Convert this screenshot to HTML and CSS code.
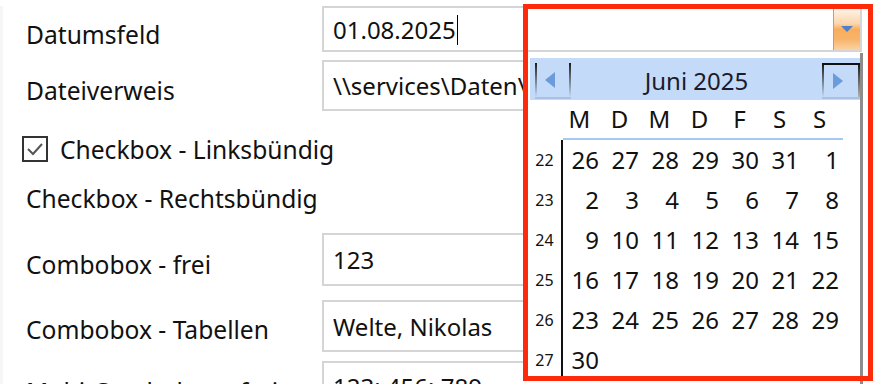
FILE: index.html
```html
<!DOCTYPE html>
<html lang="de">
<head>
    <meta charset="UTF-8">
    <title>Formular</title>
    <link rel="stylesheet" href="styles.css">
</head>
<body>
    <div class="form">
        <!-- Datumsfeld -->
        <div class="row row-date">
            <div class="label">Datumsfeld</div>
            <div class="field field-date">
                <span class="value">01.08.2025<span class="caret"></span></span>
                <div class="drop-button">
                    <svg width="12" height="7" viewBox="0 0 12 7"><polygon points="0,0 12,0 6,6" fill="#4f7fc8"/></svg>
                </div>
            </div>
        </div>

        <div class="row row-file">
            <div class="label">Dateiverweis</div>
            <div class="field"><span class="value">\\services\Daten\Projekte</span></div>
        </div>

        <div class="row row-check-left">
            <div class="checkbox">
                <svg width="22" height="22" viewBox="0 0 22 22"><polyline points="4,11 9,16 18,6" fill="none" stroke="#555" stroke-width="2"/></svg>
            </div>
            <div class="check-label">Checkbox - Linksbündig</div>
        </div>

        <div class="row row-check-right">
            <div class="label">Checkbox - Rechtsbündig</div>
        </div>

        <div class="row row-combo">
            <div class="label">Combobox - frei</div>
            <div class="field"><span class="value">123</span></div>
        </div>

        <div class="row row-table">
            <div class="label">Combobox - Tabellen</div>
            <div class="field"><span class="value">Welte, Nikolas</span></div>
        </div>

        <div class="row row-multi">
            <div class="label">Multi-Combobox - frei</div>
            <div class="field"><span class="value">123; 456; 789</span></div>
        </div>
    </div>

    <!-- Kalender-Popup -->
    <div class="calendar">
        <div class="cal-head">
            <div class="nav nav-prev">
                <svg width="10" height="16" viewBox="0 0 10 16"><polygon points="10,0 10,16 0,8" fill="#6b9bd8"/></svg>
            </div>
            <div class="cal-title">Juni 2025</div>
            <div class="nav nav-next">
                <svg width="10" height="16" viewBox="0 0 10 16"><polygon points="0,0 0,16 10,8" fill="#6b9bd8"/></svg>
            </div>
        </div>
        <div class="cal-grid">
            <div class="wk-empty"></div>
            <div class="dow">M</div><div class="dow">D</div><div class="dow">M</div><div class="dow">D</div><div class="dow">F</div><div class="dow">S</div><div class="dow">S</div>

            <div class="wk">22</div>
            <div class="day">26</div><div class="day">27</div><div class="day">28</div><div class="day">29</div><div class="day">30</div><div class="day">31</div><div class="day">1</div>

            <div class="wk">23</div>
            <div class="day">2</div><div class="day">3</div><div class="day">4</div><div class="day">5</div><div class="day">6</div><div class="day">7</div><div class="day">8</div>

            <div class="wk">24</div>
            <div class="day">9</div><div class="day">10</div><div class="day">11</div><div class="day">12</div><div class="day">13</div><div class="day">14</div><div class="day">15</div>

            <div class="wk">25</div>
            <div class="day">16</div><div class="day">17</div><div class="day">18</div><div class="day">19</div><div class="day">20</div><div class="day">21</div><div class="day">22</div>

            <div class="wk">26</div>
            <div class="day">23</div><div class="day">24</div><div class="day">25</div><div class="day">26</div><div class="day">27</div><div class="day">28</div><div class="day">29</div>

            <div class="wk">27</div>
            <div class="day">30</div><div class="day"></div><div class="day"></div><div class="day"></div><div class="day"></div><div class="day"></div><div class="day"></div>
        </div>
    </div>

    <!-- Markierung -->
    <div class="highlight"></div>
</body>
</html>
```

FILE: styles.css
```css
body{
    margin: 0;
    background: #fff;
    font-family: "Noto Sans", "Open Sans", sans-serif;
    font-size: 24px;
    color: #111;
    overflow: hidden;
    height: 384px;
}
.form{
    border-left: 3px solid #f6f6f6;
    padding-left: 23px;
    height: 384px;
}
.row{
    display: flex;
    align-items: center;
}
.label,
.check-label{
    font-size: 24.6px;
}
.label{
    width: 296px;
    padding-top: 10px;
    white-space: nowrap;
}
.field{
    box-sizing: border-box;
    width: 540px;
    height: 50px;
    border: 2px solid #d5d5d5;
    background: #fff;
    display: flex;
    align-items: center;
    padding-left: 9px;
    white-space: nowrap;
    overflow: hidden;
}
.caret{
    display: inline-block;
    width: 0;
    height: 30px;
    border-right: 1px solid #000;
    vertical-align: middle;
    margin-left: 1px;
    margin-top: -4px;
}

.row-date{ margin-top: 6px; }
.row-date .field{ height: 46px; position: relative; }
.row-file{ margin-top: 8px; }
.row-file .field{ height: 51px; }
.row-check-left{ margin-top: 20px; height: 36px; }
.row-check-right{ margin-top: 13px; height: 36px; }
.row-check-right .label{ padding-top: 0; }
.row-combo{ margin-top: 17px; }
.row-combo .field{ height: 53px; }
.row-table{ margin-top: 14px; }
.row-table .field{ height: 52px; }
.row-table .label{ padding-top: 6px; }
.row-multi{ margin-top: 9px; }

.drop-button{
    position: absolute;
    right: 0;
    top: 1px;
    bottom: 0;
    width: 26px;
    border-left: 1px solid #b3a57a;
    background: linear-gradient(#fff3e6 0%, #fcd7ad 35%, #f9ad5c 50%, #f8b46c 75%, #fbd3a5 100%);
    display: flex;
    align-items: center;
    justify-content: center;
}

.checkbox{
    box-sizing: border-box;
    width: 26px;
    height: 26px;
    border: 2px solid #333;
    margin-left: -4px;
    margin-right: 12px;
    display: flex;
    align-items: center;
    justify-content: center;
}

/* Kalender */
.calendar{
    position: absolute;
    left: 528px;
    top: 53px;
    width: 335px;
    height: 340px;
    box-sizing: border-box;
    background: #fff;
    border-right: 3px solid #8c8c8c;
    padding: 5px 0 0 2px;
}
.cal-head{
    height: 42px;
    background: #c3daf9;
    display: flex;
    align-items: center;
    padding: 0 0 0 5px;
}
.nav{
    box-sizing: border-box;
    height: 36px;
    margin-top: 3px;
    display: flex;
    align-items: center;
    justify-content: center;
    border-bottom: 2px solid #a9c2e4;
}
.nav-prev{
    width: 36px;
    background:
        linear-gradient(#1c1c1c, #c3daf9) left / 2px 100% no-repeat,
        linear-gradient(#1c1c1c, #c3daf9) right / 2px 100% no-repeat;
    padding-right: 6px;
}
.nav-next{
    width: 38px;
    border-top: 2px solid #111;
    background:
        linear-gradient(#1c1c1c, #c3daf9) left / 2px 100% no-repeat,
        linear-gradient(#1c1c1c, #b0b0b0) right / 2px 100% no-repeat;
    padding-right: 6px;
}
.cal-title{
    flex: 1;
    text-align: center;
    color: #1b1b2b;
    padding-top: 2px;
}
.cal-grid{
    display: grid;
    grid-template-columns: 33px repeat(7, 40px);
    grid-template-rows: 40px repeat(6, 40px);
}
.dow{
    text-align: center;
    padding-right: 7px;
    border-bottom: 2px solid #a6c8f2;
    line-height: 38px;
}
.wk{
    box-sizing: border-box;
    border-right: 2px solid #111;
    font-size: 16px;
    text-align: center;
    padding-right: 2px;
    line-height: 40px;
}
.day{
    text-align: right;
    padding-right: 4px;
    line-height: 40px;
}

.highlight{
    position: absolute;
    left: 523px;
    top: 4px;
    width: 350px;
    height: 377px;
    box-sizing: border-box;
    border: 5px solid #fe2a0c;
}
```
